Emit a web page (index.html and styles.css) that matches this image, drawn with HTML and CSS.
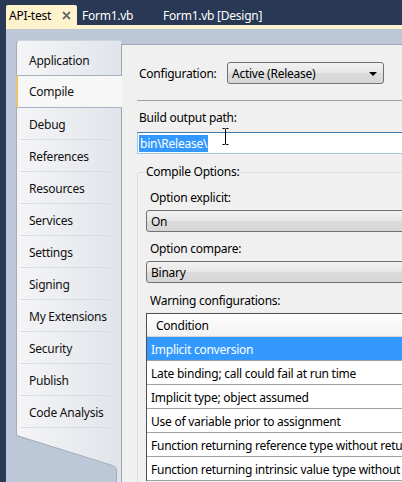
FILE: index.html
```html
<!DOCTYPE html>
<html>
<head>
<meta charset="utf-8">
<link rel="stylesheet" href="styles.css">
</head>
<body>
<div class="tabs">
  <div class="tab active"><span>API-test</span><svg class="close" width="9" height="9" viewBox="0 0 9 9"><path d="M1 1L8 8M8 1L1 8" stroke="#6b6b6b" stroke-width="1.8"/></svg></div>
  <div class="tab second">Form1.vb</div>
  <div class="tab third">Form1.vb [Design]</div>
</div>
<div class="doc">
  <div class="well">
    <nav class="side">
      <div class="list">
        <div class="item">Application</div>
        <div class="item sel">Compile</div>
        <div class="item">Debug</div>
        <div class="item">References</div>
        <div class="item">Resources</div>
        <div class="item">Services</div>
        <div class="item">Settings</div>
        <div class="item">Signing</div>
        <div class="item">My Extensions</div>
        <div class="item">Security</div>
        <div class="item">Publish</div>
        <div class="item">Code Analysis</div>
      </div>
      <svg class="foot" width="105" height="54" viewBox="0 0 105 54">
        <defs>
          <linearGradient id="pg" x1="0" y1="0" x2="1" y2="0">
            <stop offset="0" stop-color="#f5f5f6"/>
            <stop offset="1" stop-color="#e0e4ea"/>
          </linearGradient>
        </defs>
        <polygon points="0,0 105,0 105,54 100,54 100,41 97,38 0,7" fill="url(#pg)"/>
        <path d="M0.5 0V7.5L96.5 37.5Q100.5 38.5 100.5 42V54" fill="none" stroke="#a3abb9" stroke-width="1"/>
      </svg>
    </nav>
    <main class="panel">
      <div class="config-row">
        <span class="config-label">Configuration:</span>
        <div class="combo config-combo"><span>Active (Release)</span><span class="arrow"></span></div>
      </div>
      <div class="sep"></div>
      <div class="label build-label">Build output path:</div>
      <div class="textbox"><span class="selected">bin\Release\</span></div>
      <fieldset class="group">
        <legend>Compile Options:</legend>
        <div class="label opt-label first">Option explicit:</div>
        <div class="combo wide">On</div>
        <div class="label opt-label compare">Option compare:</div>
        <div class="combo wide">Binary</div>
        <div class="label opt-label warn">Warning configurations:</div>
        <div class="grid">
          <div class="grid-head">Condition</div>
          <div class="row sel-row">Implicit conversion</div>
          <div class="row">Late binding; call could fail at run time</div>
          <div class="row">Implicit type; object assumed</div>
          <div class="row">Use of variable prior to assignment</div>
          <div class="row">Function returning reference type without return value</div>
          <div class="row">Function returning intrinsic value type without return value</div>
        </div>
      </fieldset>
    </main>
  </div>
</div>
<svg class="ibeam" width="9" height="17" viewBox="0 0 9 17"><path d="M1.5 0.5H3.5Q4.5 0.5 4.5 1.5V15.5Q4.5 16.5 3.5 16.5H1.5M7.5 0.5H5.5Q4.5 0.5 4.5 1.5M4.5 15.5Q4.5 16.5 5.5 16.5H7.5" fill="none" stroke="#000" stroke-width="1"/></svg>
</body>
</html>
```

FILE: styles.css
```css
html, body {
  margin: 0;
  padding: 0;
}
body {
  width: 402px;
  height: 482px;
  overflow: hidden;
  background: #293955;
  font-family: "Noto Sans", "Open Sans", sans-serif;
  font-size: 12px;
  letter-spacing: -0.25px;
  color: #000;
  position: relative;
}
.tabs {
  height: 25px;
  display: flex;
  align-items: flex-end;
  padding-left: 6px;
}
.tab {
  height: 20px;
  line-height: 20px;
  padding-top: 1px;
  color: #fff;
  box-sizing: border-box;
}
.tab.active {
  background: #fff3ce;
  color: #000;
  border-radius: 2px 2px 0 0;
  padding: 1px 6px 0 3px;
  display: flex;
  align-items: center;
  width: 71px;
  justify-content: space-between;
}
.close {
  display: block;
  margin-top: 0;
}
.tab.second {
  width: 81px;
  padding-left: 5px;
}
.tab.third {
  padding-left: 5px;
}
.doc {
  margin-left: 6px;
  border-top: 4px solid #fff3ce;
  background: #bcc7d8;
  height: 453px;
}
.well {
  display: flex;
  padding: 11px 0 0 10px;
}
.side {
  width: 105px;
  flex: none;
  display: flex;
  flex-direction: column;
}
.list {
  background: linear-gradient(to right, #f5f5f6, #e0e4ea);
  border-top: 1px solid #cdd3dc;
  border-left: 1px solid #a3abb9;
  border-top-left-radius: 4px;
  padding-top: 3px;
}
.item {
  position: relative;
  height: 32px;
  line-height: 31px;
  padding-top: 1px;
  padding-left: 12px;
  box-sizing: border-box;
  color: #111;
}
.item::after {
  content: "";
  position: absolute;
  left: 4px;
  right: 11px;
  bottom: 0;
  height: 1px;
  background: #d7dbe2;
}
.item.sel {
  height: 33px;
  margin-top: -1px;
  margin-left: -1px;
  margin-right: -1px;
  padding-left: 11px;
  padding-top: 1px;
  background: #f7f7f7;
  border-top: 1px solid #a8b1bf;
  border-bottom: 1px solid #a8b1bf;
  border-left: 2px solid #e6c46a;
  border-radius: 2px 0 0 2px;
  z-index: 1;
  line-height: 30px;
}
.item.sel::after {
  display: none;
}
.foot {
  display: block;
}
.panel {
  flex: 1;
  margin-top: 4px;
  height: 500px;
  border-top: 1px solid #9ea7b5;
  border-left: 1px solid #9ea7b5;
  background: #f0f0f0;
  padding-top: 17px;
  min-width: 0;
}
.config-row {
  display: flex;
  align-items: center;
  margin-left: 17px;
  height: 22px;
}
.config-label {
  width: 88px;
  flex: none;
  padding-top: 1px;
}
.combo {
  height: 22px;
  box-sizing: border-box;
  border: 1px solid #707070;
  border-radius: 3px;
  background: linear-gradient(to bottom, #f2f2f2, #e6e6e6 50%, #dcdcdc 51%, #d6d6d6);
  line-height: 20px;
  padding-left: 4px;
  padding-top: 1px;
}
.config-combo {
  width: 157px;
  flex: none;
  display: flex;
  justify-content: space-between;
  align-items: center;
}
.arrow {
  width: 0;
  height: 0;
  border-left: 4px solid transparent;
  border-right: 4px solid transparent;
  border-top: 4px solid #000;
  margin-right: 6px;
}
.sep {
  margin: 16px 0 0 15px;
  height: 1px;
  background: #a0a0a0;
}
.label {
  line-height: 16px;
}
.build-label {
  margin: 9px 0 0 17px;
}
.textbox {
  margin: 6px 0 0 15px;
  height: 22px;
  width: 320px;
  box-sizing: border-box;
  background: #fff;
  border: 1px solid #a4c9e3;
  border-top-color: #3d7bad;
  padding: 2px 0 0 1px;
  line-height: 17px;
}
.selected {
  display: inline-block;
  background: #3399ff;
  color: #fff;
  padding: 0 1px;
}
.group {
  margin: 10px 0 0 15px;
  border: 1px solid #d5dfe5;
  border-radius: 3px;
  padding: 0 0 0 8px;
  width: 320px;
  min-width: 0;
  height: 400px;
}
.group legend {
  padding: 0;
  line-height: 16px;
}
.opt-label {
  padding-left: 4px;
  margin-top: 8px;
}
.opt-label.first {
  margin-top: 10px;
}
.opt-label.compare {
  margin-top: 9px;
}
.combo.wide {
  width: 320px;
  margin-top: 4px;
  border-radius: 3px 0 0 3px;
}
.opt-label.warn {
  margin-top: 10px;
}
.grid {
  margin-top: 4px;
  width: 320px;
  border-top: 1px solid #505050;
  border-left: 1px solid #505050;
  background: #fff;
}
.grid-head {
  height: 23px;
  box-sizing: border-box;
  border-bottom: 1px solid #d5d5d5;
  background: linear-gradient(to bottom, #ffffff, #f2f2f2);
  line-height: 21px;
  padding-top: 1px;
  padding-left: 9px;
}
.row {
  height: 24px;
  box-sizing: border-box;
  border-bottom: 1px solid #a0a0a0;
  line-height: 22px;
  padding-top: 2px;
  padding-left: 4px;
  white-space: nowrap;
}
.row.sel-row {
  background: #3399ff;
  color: #fff;
}
.ibeam {
  position: absolute;
  left: 221px;
  top: 128px;
}
```
